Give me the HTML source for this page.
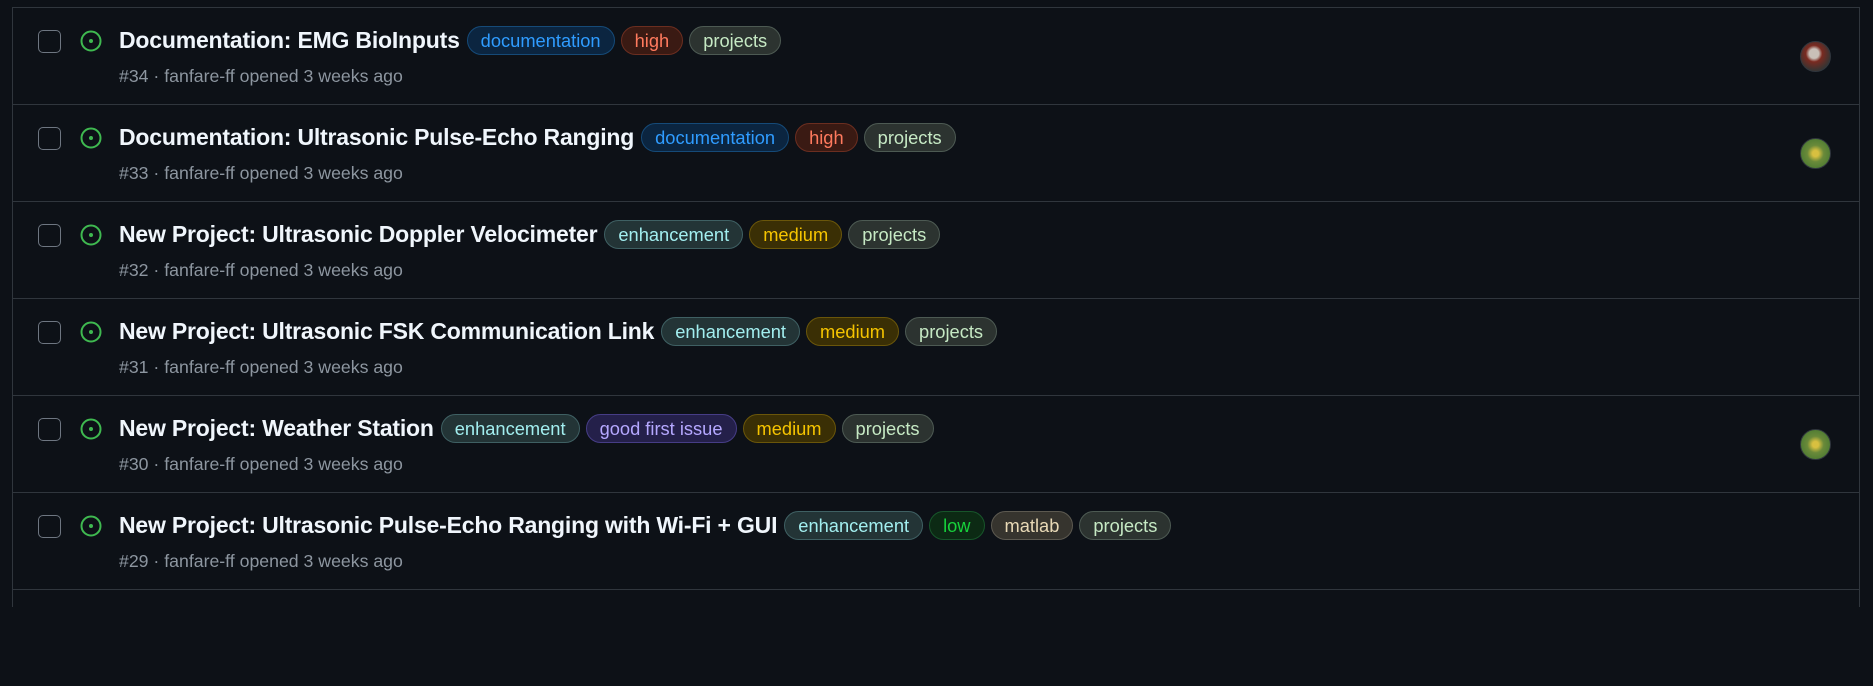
<!DOCTYPE html>
<html><head><meta charset="utf-8"><style>
body{margin:0;background:#0d1117;width:1873px;height:596px;overflow:hidden;font-family:"Liberation Sans",sans-serif;}
.box{position:absolute;left:12px;top:7px;width:1846px;height:600px;border-left:1px solid #30363d;border-right:1px solid #30363d;}
.row{position:relative;height:96px;border-top:1px solid #30363d;}
.cb{position:absolute;left:25px;top:22px;width:21px;height:21px;border:1px solid #6e7681;border-radius:5px;background:#0d1117;}
.ic{position:absolute;left:67px;top:22px;}
.t{position:absolute;left:106px;top:18px;display:flex;align-items:center;white-space:nowrap;}
.tt{color:#f0f6fc;font-weight:bold;font-size:23px;margin-right:7px;letter-spacing:-0.2px;}
.l{display:inline-block;height:27px;line-height:27px;border-radius:15px;padding:0 13px;font-size:18.3px;margin-right:6px;border:1px solid;}
.s{position:absolute;left:106px;top:58px;color:#8d96a0;font-size:17.7px;}
.av{position:absolute;left:1787px;top:33px;width:29px;height:29px;border-radius:50%;border:1px solid #30363d;}
.doc{color:#2f9cff;background:#0b2540;border-color:#154a78}
.high{color:#ff7a5e;background:#3a1a13;border-color:#6b2e20}
.proj{color:#c6e9c4;background:#2c3330;border-color:#4d5a53}
.enh{color:#a2eeef;background:#233436;border-color:#3f6063}
.med{color:#f5c400;background:#3a2f05;border-color:#6a560a}
.gfi{color:#b5a8ff;background:#24204a;border-color:#463d86}
.low{color:#17d13b;background:#0c2a14;border-color:#17552a}
.mat{color:#e8d9b6;background:#36342e;border-color:#5c5950}
</style></head><body>
<div class="box">
<div class="row"><div class="cb"></div><svg class="ic" width="22" height="22" viewBox="0 0 22 22"><circle cx="11" cy="11" r="9.5" fill="none" stroke="#3fb950" stroke-width="2"/><circle cx="11" cy="11" r="2" fill="#3fb950"/></svg>
<div class="t"><span class="tt">Documentation: EMG BioInputs</span><span class="l doc">documentation</span><span class="l high">high</span><span class="l proj">projects</span></div>
<div class="s">#34 · fanfare-ff opened 3 weeks ago</div>
<div class="av" style="background:radial-gradient(circle at 45% 40%,#c9c0b8 0 20%,#7a2a20 35%,#3a3432 70%)"></div></div>

<div class="row"><div class="cb"></div><svg class="ic" width="22" height="22" viewBox="0 0 22 22"><circle cx="11" cy="11" r="9.5" fill="none" stroke="#3fb950" stroke-width="2"/><circle cx="11" cy="11" r="2" fill="#3fb950"/></svg>
<div class="t"><span class="tt">Documentation: Ultrasonic Pulse-Echo Ranging</span><span class="l doc">documentation</span><span class="l high">high</span><span class="l proj">projects</span></div>
<div class="s">#33 · fanfare-ff opened 3 weeks ago</div>
<div class="av" style="background:radial-gradient(circle at 50% 50%,#d8c040 0 15%,#6a8a3a 40%,#4b7a32 80%)"></div></div>

<div class="row"><div class="cb"></div><svg class="ic" width="22" height="22" viewBox="0 0 22 22"><circle cx="11" cy="11" r="9.5" fill="none" stroke="#3fb950" stroke-width="2"/><circle cx="11" cy="11" r="2" fill="#3fb950"/></svg>
<div class="t"><span class="tt">New Project: Ultrasonic Doppler Velocimeter</span><span class="l enh">enhancement</span><span class="l med">medium</span><span class="l proj">projects</span></div>
<div class="s">#32 · fanfare-ff opened 3 weeks ago</div></div>

<div class="row"><div class="cb"></div><svg class="ic" width="22" height="22" viewBox="0 0 22 22"><circle cx="11" cy="11" r="9.5" fill="none" stroke="#3fb950" stroke-width="2"/><circle cx="11" cy="11" r="2" fill="#3fb950"/></svg>
<div class="t"><span class="tt">New Project: Ultrasonic FSK Communication Link</span><span class="l enh">enhancement</span><span class="l med">medium</span><span class="l proj">projects</span></div>
<div class="s">#31 · fanfare-ff opened 3 weeks ago</div></div>

<div class="row"><div class="cb"></div><svg class="ic" width="22" height="22" viewBox="0 0 22 22"><circle cx="11" cy="11" r="9.5" fill="none" stroke="#3fb950" stroke-width="2"/><circle cx="11" cy="11" r="2" fill="#3fb950"/></svg>
<div class="t"><span class="tt">New Project: Weather Station</span><span class="l enh">enhancement</span><span class="l gfi">good first issue</span><span class="l med">medium</span><span class="l proj">projects</span></div>
<div class="s">#30 · fanfare-ff opened 3 weeks ago</div>
<div class="av" style="background:radial-gradient(circle at 50% 50%,#d8c040 0 15%,#6a8a3a 40%,#4b7a32 80%)"></div></div>

<div class="row"><div class="cb"></div><svg class="ic" width="22" height="22" viewBox="0 0 22 22"><circle cx="11" cy="11" r="9.5" fill="none" stroke="#3fb950" stroke-width="2"/><circle cx="11" cy="11" r="2" fill="#3fb950"/></svg>
<div class="t"><span class="tt">New Project: Ultrasonic Pulse-Echo Ranging with Wi-Fi + GUI</span><span class="l enh">enhancement</span><span class="l low">low</span><span class="l mat">matlab</span><span class="l proj">projects</span></div>
<div class="s">#29 · fanfare-ff opened 3 weeks ago</div></div>
<div class="row"></div>
</div>
</body></html>
